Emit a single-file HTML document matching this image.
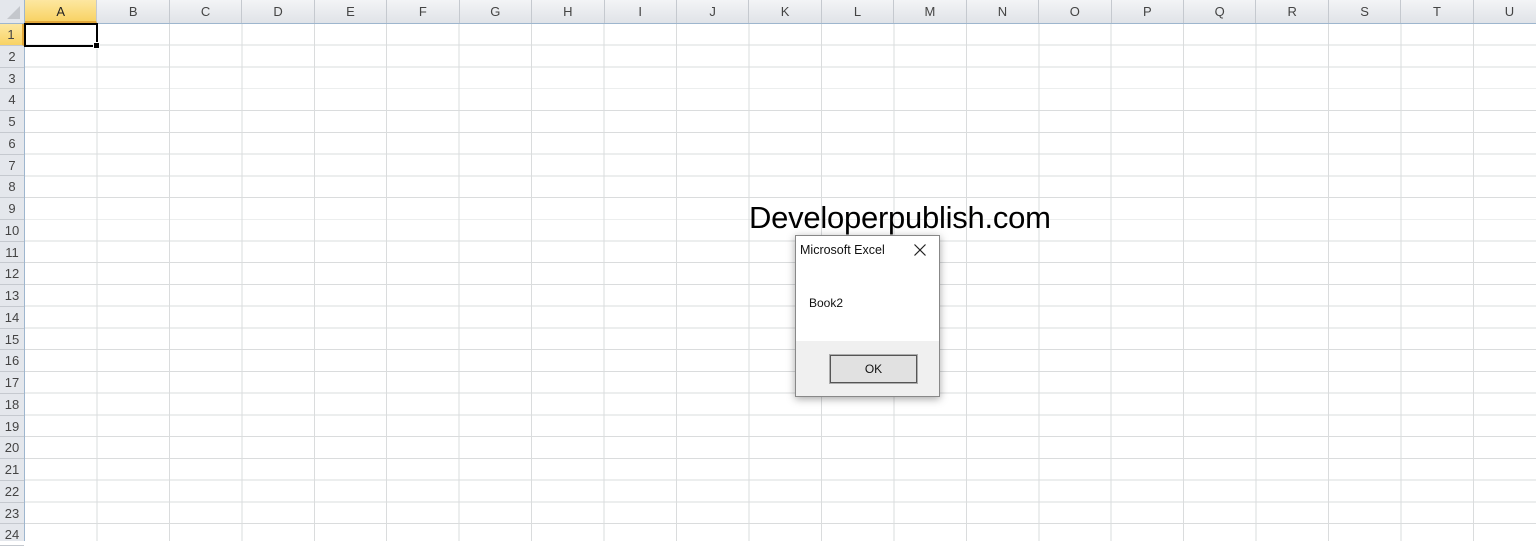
<!DOCTYPE html>
<html><head><meta charset="utf-8"><style>
*{margin:0;padding:0;box-sizing:border-box}
body{width:1536px;height:541px;overflow:hidden;background:#fff;font-family:"Liberation Sans",sans-serif;position:relative}
.grid{position:absolute;left:25px;top:24px;width:1511px;height:517px;
background-image:repeating-linear-gradient(to right,transparent 0,transparent 71.45px,#dadcdd 71.45px,#dadcdd 72.45px),repeating-linear-gradient(to bottom,transparent 0,transparent 20.75px,#dadcdd 20.75px,#dadcdd 21.75px);}
.colh{position:absolute;left:25px;top:0;height:24px;width:1511px;display:flex;background:linear-gradient(#f3f4f6,#e0e3e8);border-bottom:1px solid #9eb6ce}
.colh div{flex:0 0 72.45px;height:23px;border-right:1px solid #c5c9cf;text-align:center;font-size:13px;line-height:24px;color:#444}
.colh div.s{background:linear-gradient(#fde7a0,#f8d365);border-bottom:2px solid #e2a83c;color:#222}
.rowh{position:absolute;left:0;top:24px;width:25px;height:517px;background:#e4e7ec;border-right:1px solid #9eb6ce}
.rowh div{height:21.75px;border-bottom:1px solid #c5c9cf;text-align:center;font-size:13px;line-height:22px;color:#444}
.rowh div.s{background:linear-gradient(#fde7a0,#f8d365);border-right:2px solid #e2a83c}
.corner{position:absolute;left:0;top:0;width:25px;height:24px;background:#e4e7ec;border-right:1px solid #9eb6ce;border-bottom:1px solid #9eb6ce}
.corner:after{content:"";position:absolute;right:4px;bottom:4px;border-left:13px solid transparent;border-bottom:13px solid #c4c7cc}
.sel{position:absolute;left:24px;top:23px;width:74px;height:24px;border:2px solid #000}
.sel:after{content:"";position:absolute;right:-4px;bottom:-4px;width:5px;height:5px;background:#000;border:1px solid #fff}
.big{position:absolute;left:749px;top:200px;font-size:31px;color:#000;font-family:"Liberation Sans",sans-serif;letter-spacing:-0.25px}
.dlg{position:absolute;left:795px;top:235px;width:145px;height:162px;background:#fff;border:1px solid #888;box-shadow:0 2px 8px rgba(0,0,0,.35)}
.dlg .t{position:absolute;left:4px;top:7px;font-size:12.5px;color:#111}
.dlg .x{position:absolute;left:117px;top:7px}
.dlg .m{position:absolute;left:13px;top:60px;font-size:12px;color:#111}
.dlg .f{position:absolute;left:0;top:105px;width:143px;height:55px;background:#f0f0f0}
.ok{position:absolute;left:33px;top:13px;width:89px;height:30px;background:#e1e1e1;border:1px solid #adadad;outline:1px solid #555;outline-offset:-2px;text-align:center;line-height:28px;font-size:12px;color:#111}
</style></head><body>
<div class="grid"></div>
<div class="corner"></div>
<div class="colh"><div class="s">A</div><div>B</div><div>C</div><div>D</div><div>E</div><div>F</div><div>G</div><div>H</div><div>I</div><div>J</div><div>K</div><div>L</div><div>M</div><div>N</div><div>O</div><div>P</div><div>Q</div><div>R</div><div>S</div><div>T</div><div>U</div></div>
<div class="rowh"><div class="s">1</div><div>2</div><div>3</div><div>4</div><div>5</div><div>6</div><div>7</div><div>8</div><div>9</div><div>10</div><div>11</div><div>12</div><div>13</div><div>14</div><div>15</div><div>16</div><div>17</div><div>18</div><div>19</div><div>20</div><div>21</div><div>22</div><div>23</div><div>24</div></div>
<div class="sel"></div>
<div class="big">Developerpublish.com</div>
<div class="dlg">
<div class="t">Microsoft Excel</div>
<svg class="x" width="14" height="14" viewBox="0 0 14 14"><path d="M1.5 1.5L12.5 12.5M12.5 1.5L1.5 12.5" stroke="#222" stroke-width="1.2"/></svg>
<div class="m">Book2</div>
<div class="f"><div class="ok">OK</div></div>
</div>
</body></html>
